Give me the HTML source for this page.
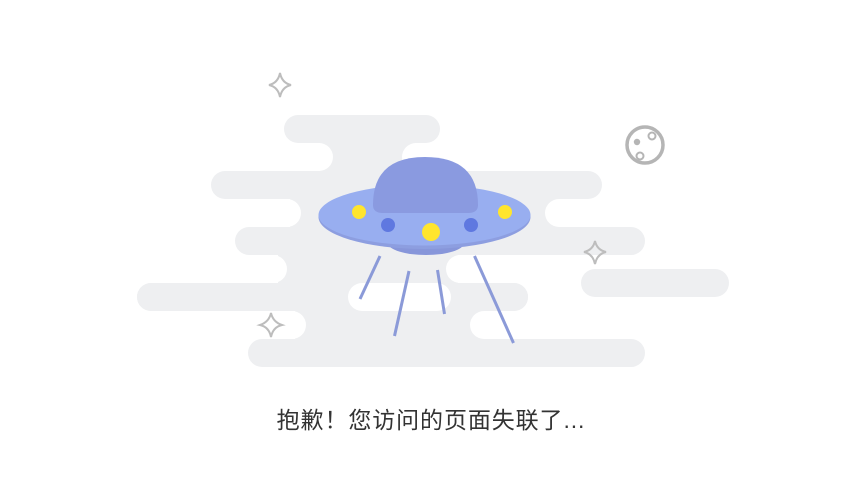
<!DOCTYPE html>
<html><head><meta charset="utf-8"><style>
html,body{margin:0;padding:0;background:#fff;width:844px;height:496px;overflow:hidden}
svg{position:absolute;left:0;top:0}
.t{position:absolute;left:9px;width:844px;top:404px;text-align:center;font-family:"Liberation Sans","Noto Sans CJK SC",sans-serif;font-size:23px;color:#333;line-height:32px;letter-spacing:0.9px}
</style></head><body>
<svg width="844" height="496" viewBox="0 0 844 496">
<g fill="#eeeff1">
<rect x="284" y="115" width="156" height="28" rx="14"/>
<rect x="211" y="171" width="391" height="28" rx="14"/>
<rect x="235" y="227" width="410" height="28" rx="14"/>
<rect x="137" y="283" width="391" height="28" rx="14"/>
<rect x="248" y="339" width="397" height="28" rx="14"/>
<rect x="320" y="140" width="95" height="34"/>
<rect x="290" y="196" width="270" height="34"/>
<rect x="278" y="252" width="180" height="34"/>
<rect x="295" y="308" width="190" height="34"/>
</g>
<g fill="#fff">
<rect x="-100" y="143" width="433" height="28" rx="14"/>
<rect x="402" y="143" width="500" height="28" rx="14"/>
<rect x="-100" y="199" width="401" height="28" rx="14"/>
<rect x="545" y="199" width="500" height="28" rx="14"/>
<rect x="-100" y="255" width="387" height="28" rx="14"/>
<rect x="446" y="255" width="500" height="28" rx="14"/>
<rect x="-100" y="311" width="406" height="28" rx="14"/>
<rect x="470" y="311" width="500" height="28" rx="14"/>
</g>
<rect x="137" y="283" width="391" height="28" rx="14" fill="#eeeff1"/>
<rect x="348" y="283" width="103" height="28" rx="14" fill="#fff"/>
<rect x="581" y="269" width="148" height="28" rx="14" fill="#eeeff1"/>
<g stroke="#8b9ad8" stroke-width="3">
<line x1="380" y1="256" x2="360" y2="299"/>
<line x1="409" y1="271" x2="394.5" y2="336"/>
<line x1="437.5" y1="270" x2="444.5" y2="314"/>
<line x1="474.5" y1="256" x2="513.5" y2="343"/>
</g>
<ellipse cx="426" cy="243" rx="38" ry="12" fill="#8796da"/>
<ellipse cx="424.5" cy="217" rx="106" ry="32" fill="#8d9ee0"/>
<ellipse cx="424.5" cy="215" rx="106" ry="30.5" fill="#98aef0"/>
<path d="M373 205 Q373 157 425 157 Q478 157 478 205 Q478 213 468 213 L383 213 Q373 213 373 205Z" fill="#8a9ae0"/>
<g fill="#ffe52e">
<circle cx="359" cy="212" r="7"/><circle cx="505" cy="212" r="7"/><circle cx="431" cy="232" r="9"/>
</g>
<g fill="#5f78e0"><circle cx="388" cy="225" r="7"/><circle cx="471" cy="225" r="7"/></g>
<g fill="none" stroke="#b5b5b5">
<ellipse cx="645" cy="145" rx="18" ry="18" stroke-width="3.5"/>
<circle cx="652" cy="136" r="3.5" stroke-width="2"/>
<circle cx="640" cy="156" r="3.5" stroke-width="2"/>
</g>
<circle cx="637" cy="142" r="3.2" fill="#b5b5b5"/>
<g fill="none" stroke="#bdbdbd" stroke-width="2">
<path d="M280 73 Q282 83 291 85 Q282 87 280 97 Q278 87 269 85 Q278 83 280 73Z"/>
<path d="M595 241 Q597 250 606 252 Q597 254 595 264 Q593 254 584 252 Q593 250 595 241Z"/>
<path d="M271 313 Q273 322 282 325 Q273 327 271 337 Q269 327 260 325 Q269 322 271 313Z"/>
</g>
</svg>
<div class="t">抱歉！您访问的页面失联了...</div>
</body></html>
